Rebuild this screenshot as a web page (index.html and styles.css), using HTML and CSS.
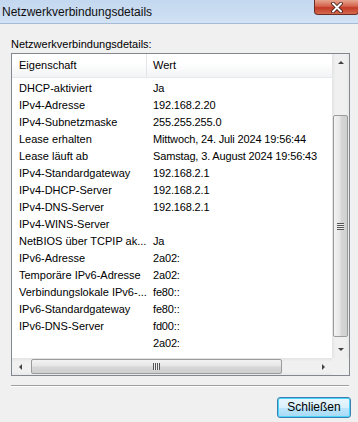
FILE: index.html
```html
<!DOCTYPE html>
<html>
  <head>
      <meta charset="utf-8">
      <title>Netzwerkverbindungsdetails</title>
      <link rel="stylesheet" href="styles.css">
  </head>
  <body>
      <div id="window">
          <div id="titlebar">
            <span class="title">Netzwerkverbindungsdetails</span>
            <div class="close">
              <svg width="14" height="11" viewBox="0 0 14 11"><path d="M3 1.5 L11 9.5 M11 1.5 L3 9.5" stroke="#3a1a18" stroke-width="3.6" stroke-linecap="round"/><path d="M3 1.5 L11 9.5 M11 1.5 L3 9.5" stroke="#fff" stroke-width="2" stroke-linecap="round"/></svg>
            </div>
          </div>
          <div id="body">
            <div class="label">Netzwerkverbindungsdetails:</div>
            <div id="listbox">
              <div class="view">
                <div class="list">
                  <div class="head">
                    <div class="h1">Eigenschaft</div>
                    <div class="h2">Wert</div>
                  </div>
                  <div class="row"><span>DHCP-aktiviert</span><span>Ja</span></div>
                  <div class="row"><span>IPv4-Adresse</span><span>192.168.2.20</span></div>
                  <div class="row"><span>IPv4-Subnetzmaske</span><span>255.255.255.0</span></div>
                  <div class="row"><span>Lease erhalten</span><span>Mittwoch, 24. Juli 2024 19:56:44</span></div>
                  <div class="row"><span>Lease läuft ab</span><span>Samstag, 3. August 2024 19:56:43</span></div>
                  <div class="row"><span>IPv4-Standardgateway</span><span>192.168.2.1</span></div>
                  <div class="row"><span>IPv4-DHCP-Server</span><span>192.168.2.1</span></div>
                  <div class="row"><span>IPv4-DNS-Server</span><span>192.168.2.1</span></div>
                  <div class="row"><span>IPv4-WINS-Server</span><span></span></div>
                  <div class="row"><span>NetBIOS über TCPIP ak...</span><span>Ja</span></div>
                  <div class="row"><span>IPv6-Adresse</span><span>2a02:</span></div>
                  <div class="row"><span>Temporäre IPv6-Adresse</span><span>2a02:</span></div>
                  <div class="row"><span>Verbindungslokale IPv6-...</span><span>fe80::</span></div>
                  <div class="row"><span>IPv6-Standardgateway</span><span>fe80::</span></div>
                  <div class="row"><span>IPv6-DNS-Server</span><span>fd00::</span></div>
                  <div class="row"><span></span><span>2a02:</span></div>
                </div>
                <div class="vscroll">
                  <div class="arrow up"></div>
                  <div class="track">
                    <div class="vthumb"><span class="grip"></span></div>
                  </div>
                  <div class="arrow down"></div>
                </div>
              </div>
              <div class="hbar">
                <div class="hscroll">
                  <div class="arrow left"></div>
                  <div class="htrack">
                    <div class="hthumb"><span class="hgrip"></span></div>
                  </div>
                  <div class="arrow right"></div>
                </div>
                <div class="corner"></div>
              </div>
            </div>
            <div class="sep"></div>
            <div class="buttons">
              <div class="btn">Schließen</div>
            </div>
          </div>
      </div>
  </body>
</html>
```
FILE: styles.css
```css
*{
  margin:0;
  padding:0;
  box-sizing:border-box;
}
body{
  width:358px;
  height:422px;
  overflow:hidden;
  background:#f0f0f0;
  font-family:"Liberation Sans", Arial, sans-serif;
  font-size:11px;
  color:#000;
}
#titlebar{
  height:24px;
  background:linear-gradient(#c3d8ef, #cadcf1 60%, #d2e3f5);
  border-bottom:1px solid #a6bcd6;
  display:flex;
  justify-content:space-between;
  align-items:flex-start;
}
.title{
  font-size:12px;
  line-height:20px;
  padding:2px 0 0 2px;
  color:#111;
}
.close{
  width:45px;
  height:15px;
  margin-right:-1px;
  border:1px solid #6b2c24;
  border-top:none;
  border-radius:0 0 4px 4px;
  background:linear-gradient(#e7a58f, #d5624c 45%, #c23a24 55%, #d46a4f);
  display:flex;
  justify-content:center;
  align-items:center;
}
#body{
  padding:13px 8px 0 11px;
}
.label{
  height:16px;
  line-height:15px;
}
#listbox{
  width:339px;
  height:323px;
  border:1px solid #828790;
  background:#fff;
  display:flex;
  flex-direction:column;
}
.view{
  display:flex;
  height:304px;
}
.list{
  flex:1;
  overflow:hidden;
}
.head{
  display:flex;
  height:24px;
  background:linear-gradient(#fff, #fff 40%, #f2f3f5);
  border-bottom:1px solid #e6e8ec;
  margin-bottom:2px;
}
.head div{
  line-height:23px;
}
.h1{
  width:135px;
  flex-shrink:0;
  padding-left:7px;
  border-right:1px solid #e3e5e8;
}
.h2{
  padding-left:6px;
}
.row{
  display:flex;
  height:17px;
  line-height:17px;
  white-space:nowrap;
}
.row span:first-child{
  width:135px;
  flex-shrink:0;
  overflow:hidden;
  padding-left:7px;
}
.row span:last-child{
  padding-left:6px;
  letter-spacing:-0.15px;
}
.vscroll{
  width:17px;
  flex-shrink:0;
  display:flex;
  flex-direction:column;
  background:linear-gradient(90deg, #e3e3e3, #f0f0f0 20%, #f0f0f0 80%, #e8e8e8);
}
.arrow{
  height:17px;
  display:flex;
  justify-content:center;
  align-items:center;
}
.arrow::before{
  content:"";
  width:0;
  height:0;
}
.up::before{
  border-left:3px solid transparent;
  border-right:3px solid transparent;
  border-bottom:3px solid #444;
}
.down::before{
  border-left:3px solid transparent;
  border-right:3px solid transparent;
  border-top:3px solid #444;
}
.left::before{
  border-top:3px solid transparent;
  border-bottom:3px solid transparent;
  border-right:3px solid #444;
}
.right::before{
  border-top:3px solid transparent;
  border-bottom:3px solid transparent;
  border-left:3px solid #444;
}
.track{
  flex:1;
  padding:44px 0 4px;
}
.vthumb{
  height:222px;
  margin:0 1px;
  border:1px solid #9a9a9a;
  border-radius:2px;
  background:linear-gradient(90deg, #f3f3f3, #e6e6e6 45%, #d6d6d6 55%, #cfcfcf);
  display:flex;
  justify-content:center;
  align-items:center;
}
.grip{
  width:7px;
  height:7px;
  background:repeating-linear-gradient(#555 0, #555 1px, #eee 1px, #eee 2px);
}
.hbar{
  display:flex;
  height:17px;
}
.hscroll{
  flex:1;
  display:flex;
  background:linear-gradient(#e3e3e3, #f0f0f0 20%, #f0f0f0 80%, #e8e8e8);
}
.hscroll .arrow{
  width:17px;
}
.htrack{
  flex:1;
  padding-left:2px;
}
.hthumb{
  width:251px;
  height:15px;
  margin-top:1px;
  border:1px solid #9a9a9a;
  border-radius:2px;
  background:linear-gradient(#f3f3f3, #e6e6e6 45%, #d6d6d6 55%, #cfcfcf);
  display:flex;
  justify-content:center;
  align-items:center;
}
.hgrip{
  width:7px;
  height:7px;
  background:repeating-linear-gradient(90deg, #555 0, #555 1px, #eee 1px, #eee 2px);
}
.corner{
  width:17px;
  background:#f0f0f0;
}
.sep{
  margin-top:9px;
  width:338px;
  height:2px;
  border-top:1px solid #a0a0a0;
  border-bottom:1px solid #fff;
}
.buttons{
  display:flex;
  justify-content:flex-end;
  padding-top:10px;
}
.btn{
  width:74px;
  height:21px;
  margin-right:-1px;
  border:1px solid #3c7fb1;
  border-radius:3px;
  box-shadow:inset 0 0 0 1px #48d4fb;
  background:linear-gradient(#eaf6fd, #d9f0fc 50%, #bee6fd 50%, #a7d9f5);
  text-align:center;
  line-height:19px;
  font-size:12px;
}
```
